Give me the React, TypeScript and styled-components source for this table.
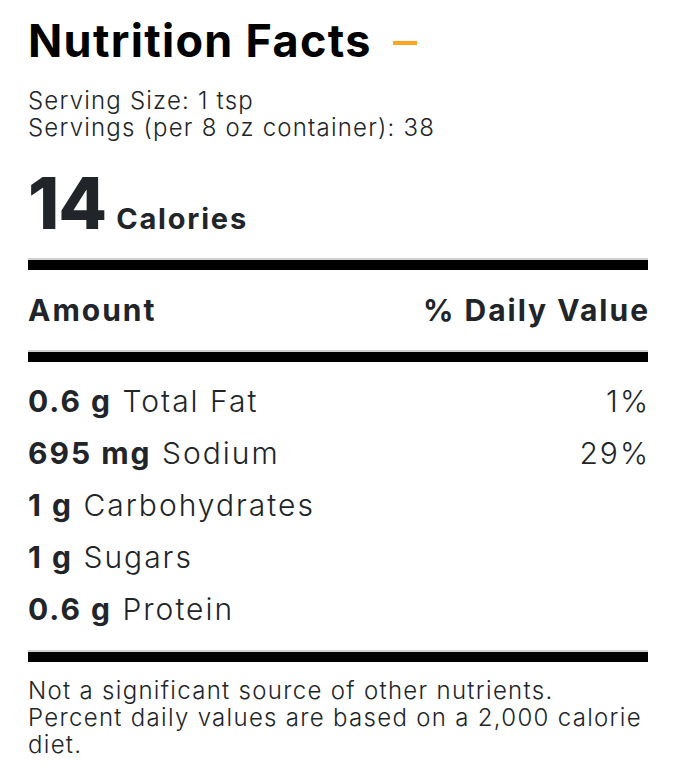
import React from "react";
import styled, { createGlobalStyle } from "styled-components";

const Global = createGlobalStyle`
  html, body { margin: 0; padding: 0; background: #fff; }
  body { font-family: Inter, "Open Sans", sans-serif; color: #212529; }
`;

const Panel = styled.section`
  width: 620px;
  padding: 13px 50px 0 28px;
`;

const TitleRow = styled.div`
  display: flex;
  align-items: center;
  gap: 21px;
  height: 56px;
`;

const Title = styled.h1`
  margin: 0;
  font-size: 45px;
  font-weight: 700;
  color: #000;
  letter-spacing: 1.3px;
  line-height: 56px;
`;

const Dash = styled.span`
  display: block;
  width: 24px;
  height: 4px;
  background: #ffa51f;
  margin-top: 4px;
`;

const Serving = styled.div`
  margin-top: 18px;
  font-size: 24px;
  font-weight: 300;
  line-height: 27px;
  letter-spacing: 1.2px;
`;

const CaloriesRow = styled.div`
  display: flex;
  align-items: baseline;
  gap: 10px;
  margin-top: 32px;
`;

const CalNumber = styled.span`
  font-size: 71px;
  font-weight: 800;
  line-height: 60px;
  letter-spacing: -1px;
`;

const CalLabel = styled.span`
  font-size: 29px;
  font-weight: 700;
  letter-spacing: 1.8px;
`;

const Rule = styled.div<{ $mt: number }>`
  margin-top: ${(p) => p.$mt}px;
  height: 10px;
  background: #000;
  border-top: 2px solid #d0d0d0;
`;

const HeadRow = styled.div`
  display: flex;
  justify-content: space-between;
  align-items: center;
  height: 80px;
  font-size: 30px;
  font-weight: 700;
  letter-spacing: 2px;
  margin-right: -2px;
`;

const List = styled.div`
  display: flex;
  flex-direction: column;
  padding: 13px 0 15px;
`;

const Item = styled.div`
  display: flex;
  justify-content: space-between;
  align-items: center;
  height: 52px;
  font-size: 30px;
  font-weight: 300;
  letter-spacing: 2px;
  margin-right: -2px;
`;

const Amount = styled.b`
  font-weight: 700;
`;

const Footer = styled.p`
  margin: 15px 0 0;
  font-size: 24px;
  font-weight: 300;
  line-height: 27px;
  letter-spacing: 1.3px;
`;

const nutrients = [
  { amt: "0.6 g", name: "Total Fat", dv: "1%" },
  { amt: "695 mg", name: "Sodium", dv: "29%" },
  { amt: "1 g", name: "Carbohydrates", dv: "" },
  { amt: "1 g", name: "Sugars", dv: "" },
  { amt: "0.6 g", name: "Protein", dv: "" },
];

export default function App() {
  return (
    <>
      <Global />
      <Panel>
        <TitleRow>
          <Title>Nutrition Facts</Title>
          <Dash />
        </TitleRow>
        <Serving>
          <div>Serving Size: 1 tsp</div>
          <div>Servings (per 8 oz container): 38</div>
        </Serving>
        <CaloriesRow>
          <CalNumber>14</CalNumber>
          <CalLabel>Calories</CalLabel>
        </CaloriesRow>
        <Rule $mt={22} />
        <HeadRow>
          <span>Amount</span>
          <span>% Daily Value</span>
        </HeadRow>
        <Rule $mt={0} />
        <List>
          {nutrients.map((n) => (
            <Item key={n.name}>
              <span>
                <Amount>{n.amt}</Amount> {n.name}
              </span>
              <span>{n.dv}</span>
            </Item>
          ))}
        </List>
        <Rule $mt={0} />
        <Footer>
          Not a significant source of other nutrients. Percent daily values are based on a 2,000 calorie diet.
        </Footer>
      </Panel>
    </>
  );
}
